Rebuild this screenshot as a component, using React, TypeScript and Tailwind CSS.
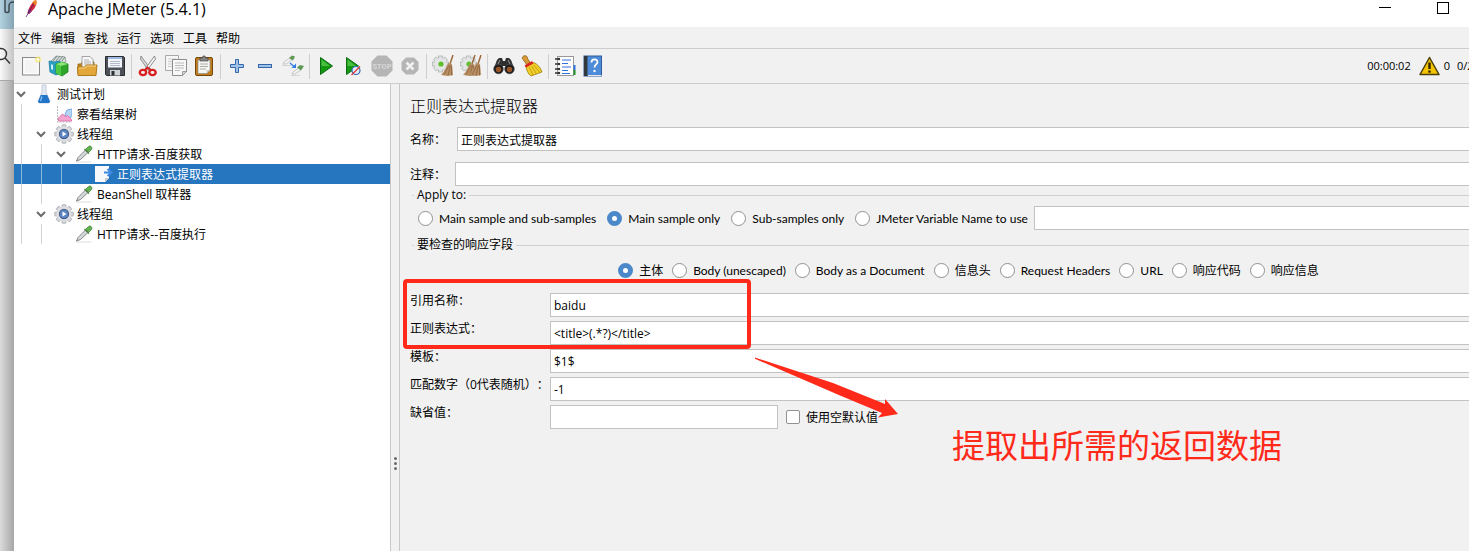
import type { ReactNode } from 'react';

interface ToolItem {
  name: string;
  icon: ReactNode;
  disabled?: boolean;
}

interface TreeItem {
  label: string;
  guides: number;
  chevron: boolean;
  icon: ReactNode;
  selected?: boolean;
}

const NewIcon = () => (
  <svg className="w-5 h-5" viewBox="0 0 20 20">
    <rect x="1.5" y="1.5" width="17" height="17.5" fill="#efefef" stroke="#8b8b8b" />
    <rect x="3" y="3" width="14" height="14.5" fill="#f4f4f4" stroke="#fff" />
    <circle cx="17" cy="3.5" r="3" fill="#f3e36b" opacity="0.8" />
    <circle cx="17" cy="3.5" r="1.5" fill="#fffde0" />
  </svg>
);

const TemplatesIcon = () => (
  <svg className="w-[22px] h-[22px]" viewBox="0 0 22 22">
    <path d="M3 6l5-5 9 1 1 5-12 4z" fill="#d9dcda" stroke="#8f9b99" strokeWidth="0.8" />
    <path d="M5 6l4-5M8 6l4-5M11 6l4-5M14 6l3-4" stroke="#6f8482" strokeWidth="0.9" />
    <path d="M1 6l5 1 6-1v12l-4 2-6-3z" fill="#2a9fc4" stroke="#1b7fa3" strokeWidth="0.8" />
    <path d="M3 9l2 1v5l-2-1z" fill="#c9ecf5" />
    <path d="M8 9l6-2 6 2v8l-6 4-6-3z" fill="#2fa52b" stroke="#1c861c" strokeWidth="0.8" />
    <path d="M8 9l5 2v10l-5-3z" fill="#4cc843" />
    <path d="M8 9l6-2 6 2-7 2z" fill="#8be678" />
  </svg>
);

const OpenIcon = () => (
  <svg className="w-[22px] h-[22px]" viewBox="0 0 22 22">
    <path d="M2 9h3l1-2h12v12H2z" fill="#c58a1d" stroke="#96640f" strokeWidth="0.8" />
    <path d="M6 1.500h8l3 3V14H6z" fill="#f7f7f7" stroke="#8f8f8f" strokeWidth="0.8" />
    <path d="M8 5h5M8 7h7M8 9h7" stroke="#a7a7a7" strokeWidth="0.9" />
    <path d="M1.500 12h7l2-2h10.500l-1 10.500H2z" fill="#e3a63a" stroke="#a87310" strokeWidth="0.9" />
    <path d="M3 13h6l2-2h9" stroke="#f8d588" fill="none" />
  </svg>
);

const SaveIcon = () => (
  <svg className="w-[22px] h-[22px]" viewBox="0 0 22 22">
    <path d="M1.500 1.500h18l1 1v18h-18l-1-1z" fill="#4d5157" stroke="#2b2d30" />
    <rect x="4" y="2" width="14" height="10.500" fill="#f1f5fb" />
    <path d="M4 2h14v2H4z" fill="#9dbbe2" />
    <path d="M6 6.500h10M6 8.500h10M6 10.500h10" stroke="#b5bcc6" />
    <rect x="6" y="15" width="10" height="5.500" fill="#cfd2d6" />
    <rect x="7.500" y="16" width="3" height="4.500" fill="#2e3034" />
  </svg>
);

const CutIcon = () => (
  <svg className="w-5 h-[22px]" viewBox="0 0 20 22">
    <path d="M3 1l9.500 13-2 1.500L2.500 4z" fill="#dcdcdc" stroke="#777" strokeWidth="0.8" />
    <path d="M16.500 1L7 14l2 1.500L17.500 4z" fill="#f2f2f2" stroke="#777" strokeWidth="0.8" />
    <ellipse cx="5" cy="17.500" rx="3.200" ry="2.600" fill="none" stroke="#d81e1e" strokeWidth="2.400" />
    <ellipse cx="14.500" cy="17.500" rx="3.200" ry="2.600" fill="none" stroke="#d81e1e" strokeWidth="2.400" />
    <path d="M7 15l2.500-2.500L12.500 15" fill="none" stroke="#d81e1e" strokeWidth="2" />
  </svg>
);

const CopyIcon = () => (
  <svg className="w-[22px] h-[22px]" viewBox="0 0 22 22">
    <path d="M.500 .500h13v15h-13z" fill="#f6f6f6" stroke="#a9a9a9" />
    <path d="M3 4h8M3 6.500h4M3 9h4M3 11.500h4" stroke="#ccc" />
    <path d="M7.500 4.500h14v12l-4 4h-10z" fill="#f8f8f8" stroke="#8d8d8d" />
    <path d="M10 8h9M10 10.500h9M10 13h9M10 15.500h5" stroke="#bbb" />
    <path d="M21.500 16.500h-4v4z" fill="#d6d6d6" stroke="#8d8d8d" strokeWidth="0.8" />
  </svg>
);

const PasteIcon = () => (
  <svg className="w-5 h-[22px]" viewBox="0 0 20 22">
    <rect x="1.500" y="2.500" width="17" height="18" rx="1.500" fill="#bf7d1e" stroke="#744607" />
    <path d="M4 5h12v10l-3.500 3.500H4z" fill="#f6f6f3" stroke="#8e8e8e" strokeWidth="0.7" />
    <path d="M6 9h8M6 11.500h8M6 14h6" stroke="#aaa" />
    <path d="M6 3h2.500l.5-2h2l.5 2H14v3H6z" fill="#858585" stroke="#4b4b4b" strokeWidth="0.7" />
    <path d="M16 15h-3.500v3.500z" fill="#cfcfcf" />
  </svg>
);

const PlusIcon = () => (
  <svg className="w-4 h-4" viewBox="0 0 16 16">
    <path d="M6.500 1.500h3v5h5v3h-5v5h-3v-5h-5v-3h5z" fill="#9fc1ea" stroke="#3467a8" />
  </svg>
);

const MinusIcon = () => (
  <svg className="w-4 h-4" viewBox="0 0 16 16">
    <rect x="1.500" y="6.500" width="13" height="3" fill="#9fc1ea" stroke="#3467a8" />
  </svg>
);

const ToggleIcon = () => (
  <svg className="w-[22px] h-[22px]" viewBox="0 0 22 22">
    <path d="M1 9l1-2 6-4 2 2-6 4z" fill="#f3f3f3" stroke="#b5b5b5" strokeWidth="0.7" />
    <path d="M7 3l3-2.500 3 1-2 4z" fill="#5f9a55" />
    <path d="M0 10.500h9" stroke="#d4d4d4" />
    <path d="M10 19l1-2 6-4 2 2-6 4z" fill="#f3f3f3" stroke="#b5b5b5" strokeWidth="0.7" />
    <path d="M15 12.500l3-2.500 4 1-3 4.500z" fill="#5f9a55" />
    <path d="M9 20.500h9" stroke="#d4d4d4" />
    <path d="M8 8l4 3.500" stroke="#2f7de0" strokeWidth="1.300" />
    <path d="M14 8.500v4.500H9.500z" fill="#2f7de0" />
  </svg>
);

const StartIcon = () => (
  <svg className="w-5 h-5" viewBox="0 0 20 20">
    <path d="M4.500 1.500v17l12-8.500z" fill="#12990f" stroke="#0c6b12" />
    <path d="M5.500 3.500v6.500h8.500z" fill="#5fcf55" opacity="0.7" />
  </svg>
);

const StartNoTimersIcon = () => (
  <svg className="w-5 h-5" viewBox="0 0 20 20">
    <path d="M2.500 1.500v17l12-8.500z" fill="#12990f" stroke="#0c6b12" />
    <path d="M3.500 3.500v6.500h8.500z" fill="#5fcf55" opacity="0.7" />
    <circle cx="12" cy="14.500" r="4" fill="#e6eefa" stroke="#2e66b5" strokeWidth="1.200" />
    <path d="M7.500 19L16 10.500" stroke="#df3a34" strokeWidth="1.200" />
  </svg>
);

const StopIcon = () => (
  <svg className="w-[22px] h-[22px]" viewBox="0 0 22 22">
    <path d="M6.500.5h9l6 6v9l-6 6h-9l-6-6v-9z" fill="#b5b5b5" />
    <text
      x="11"
      y="14"
      textAnchor="middle"
      fontSize="7.500"
      fontWeight="700"
      fontFamily="Roboto, sans-serif"
      fill="#d7d7d7"
    >
      STOP
    </text>
  </svg>
);

const ShutdownIcon = () => (
  <svg className="w-[18px] h-[18px]" viewBox="0 0 18 18">
    <path d="M5 .5h8L17.500 5v8L13 17.500H5L.5 13V5z" fill="#b5b5b5" />
    <path d="M5.500 5.500l7 7M12.500 5.500l-7 7" stroke="#f0f0f0" strokeWidth="2.600" />
  </svg>
);

const Broom = ({ x }: { x: number }) => (
  <g transform={`translate(${x} 0)`}>
    <path d="M11 0L8 9" stroke="#9a6a3c" strokeWidth="1.500" />
    <path d="M6 8l4 1 1 11-5 1-7-1c3-3 5-7 7-12z" fill="#b98f66" />
    <path d="M7 10L2 20M8.500 10L6 20.500M9.500 11v9.500" stroke="#8a6239" strokeWidth="0.800" />
  </g>
);

const Gear = () => (
  <>
    <g fill="#dfe2e2" stroke="#aaadad" strokeWidth="0.7">
      <rect x="6.500" y="1" width="4" height="16" />
      <rect x="6.500" y="1" width="4" height="16" transform="rotate(45 8.500 9)" />
      <rect x="6.500" y="1" width="4" height="16" transform="rotate(90 8.500 9)" />
      <rect x="6.500" y="1" width="4" height="16" transform="rotate(135 8.500 9)" />
    </g>
    <circle cx="8.500" cy="9" r="6" fill="#e4e6e6" />
    <circle cx="9" cy="9" r="2.600" fill="#5cc02a" />
  </>
);

const ClearIcon = () => (
  <svg className="w-[22px] h-[22px]" viewBox="0 0 22 22">
    <Gear />
    <Broom x={10} />
  </svg>
);

const ClearAllIcon = () => (
  <svg className="w-[22px] h-[22px]" viewBox="0 0 22 22">
    <Gear />
    <Broom x={4} />
    <Broom x={10} />
  </svg>
);

const SearchIcon = () => (
  <svg className="w-[22px] h-[18px]" viewBox="0 0 22 18">
    <path d="M4 3l2-2h3l1 3h2l1-3h3l2 2 3 8v3H12V9h-2v5H1v-3z" fill="#2f2f2f" />
    <circle cx="5.500" cy="12" r="4.800" fill="#1c1c1c" stroke="#555" strokeWidth="0.700" />
    <circle cx="16.500" cy="12" r="4.800" fill="#1c1c1c" stroke="#555" strokeWidth="0.700" />
    <circle cx="5.500" cy="12.500" r="2.700" fill="#9a5526" />
    <circle cx="16.500" cy="12.500" r="2.700" fill="#9a5526" />
    <path d="M7 3l-2 4M15 3l2 4" stroke="#999" />
  </svg>
);

const ResetSearchIcon = () => (
  <svg className="w-[22px] h-[22px]" viewBox="0 0 22 22">
    <path d="M2 1.500c2-2 5 0 4.500 2l2.500 4-3 2.500L2.500 5C1 4 1 2.500 2 1.500z" fill="#d79a35" stroke="#8a5a12" strokeWidth="0.800" />
    <path d="M5 11.500l7.500-4c4 1.500 7 5 8.500 9.500L10 21c-3-2-4.500-6-5-9.500z" fill="#f2ce28" stroke="#9c7d0c" strokeWidth="0.800" />
    <path d="M8 12l4 8M10.500 11l5 8M12.500 10l6.500 7.500" stroke="#b99713" strokeWidth="0.800" />
    <path d="M3.500 10.500L11 6l1.500 2.500-7.500 4z" fill="#d9281f" />
  </svg>
);

const FunctionIcon = () => (
  <svg className="w-[22px] h-[22px]" viewBox="0 0 22 22">
    <rect x="3.500" y="1.500" width="16" height="19" fill="#fff" stroke="#999" />
    <path d="M1 4h4M1 9h4M1 14h4M1 18h4" stroke="#333" strokeWidth="1.300" />
    <circle cx="5" cy="4" r="1.200" fill="#333" />
    <circle cx="5" cy="9" r="1.200" fill="#333" />
    <circle cx="5" cy="14" r="1.200" fill="#333" />
    <circle cx="5" cy="18" r="1.200" fill="#333" />
    <path d="M8 5h9M8 8.500h6M8 12h9M8 15.500h6M8 18.500h8" stroke="#2f72dc" strokeWidth="1.200" />
    <path d="M19.500 10h2v5h-2z" fill="#2f72dc" />
    <path d="M19.500 15h2v5h-2z" fill="#1d9127" />
  </svg>
);

const HelpIcon = () => (
  <svg className="w-5 h-[22px]" viewBox="0 0 20 22">
    <rect x="1" y="1" width="17.500" height="20" fill="#4e8bd8" stroke="#2f5c9c" />
    <path d="M1 1h3.500v20H1z" fill="#33383f" />
    <path d="M5 20.500h13.500" stroke="#e8e8e8" />
    <path
      d="M8.500 7.500c0-4 6-4 6-.5 0 2.500-3 2.500-3 5.500"
      fill="none"
      stroke="#fff"
      strokeWidth="1.700"
    />
    <circle cx="11.500" cy="16" r="1.200" fill="#fff" />
  </svg>
);

const WarningIcon = () => (
  <svg className="w-[21px] h-5" viewBox="0 0 21 20">
    <path d="M10.500 1.500L20 18.500H1z" fill="#f5c400" stroke="#4a3f0a" strokeWidth="1.500" strokeLinejoin="round" />
    <path d="M10.500 6.500v6.500" stroke="#2b2500" strokeWidth="2.400" />
    <path d="M10.500 14.500v2.200" stroke="#2b2500" strokeWidth="2.400" />
  </svg>
);

const FlaskIcon = () => (
  <svg className="w-[14px] h-5" viewBox="0 0 14 20">
    <path d="M5 1h4v7l4 9.500-1 1.500H2l-1-1.500L5 8z" fill="#e3e9f2" stroke="#b9c2d0" strokeWidth="0.800" />
    <path d="M3.800 11h6.400l2.800 6.500-1 1.500H2l-1-1.500z" fill="#2276c9" />
    <path d="M5 12.500L3.500 17" stroke="#8fc4f4" strokeWidth="1.200" />
  </svg>
);

const GraphIcon = () => (
  <svg className="w-4 h-[18px]" viewBox="0 0 16 18">
    <path d="M1.500 1v16H16" fill="none" stroke="#bbb" strokeDasharray="2 1" />
    <path d="M9 9l2-4 5-1v6l-2 4-4-2z" fill="#b5d4f3" stroke="#6fa6e0" strokeWidth="0.900" />
    <path d="M2.500 16v-3l4-4 3 2.500 2-1 4 4V16z" fill="#f3a4cf" stroke="#dc70ae" strokeWidth="0.900" />
  </svg>
);

const ThreadGroupIcon = () => (
  <svg className="w-5 h-5" viewBox="0 0 20 20">
    <g fill="#d5d7da" stroke="#9b9da2" strokeWidth="0.7">
      <rect x="8" y="0.700" width="4" height="18.600" rx="1" />
      <rect x="8" y="0.700" width="4" height="18.600" rx="1" transform="rotate(45 10 10)" />
      <rect x="8" y="0.700" width="4" height="18.600" rx="1" transform="rotate(90 10 10)" />
      <rect x="8" y="0.700" width="4" height="18.600" rx="1" transform="rotate(135 10 10)" />
    </g>
    <circle cx="10" cy="10" r="7.400" fill="#dfe1e4" />
    <circle cx="10" cy="10" r="4.600" fill="#5b86c2" stroke="#4b6391" strokeWidth="1.200" />
    <path d="M8.500 7.500v5l4-2.500z" fill="#fff" />
  </svg>
);

const SamplerIcon = () => (
  <svg className="w-[18px] h-[18px]" viewBox="0 0 18 18">
    <path d="M1 17h15" stroke="#ddd" />
    <path d="M1.500 16l1.500-3.500L10.500 5 13 7.500 5.500 14.500z" fill="#d7dadb" stroke="#6a6e70" strokeWidth="0.800" />
    <path d="M9.500 4l4.500 4.500" stroke="#4c7a42" strokeWidth="1.500" />
    <path d="M10.500 4.500L13.500 1.500c1.500-1.500 4.500.5 3 3l-3 3z" fill="#62b04f" stroke="#3f7d33" strokeWidth="0.700" />
  </svg>
);

const ExtractorIcon = () => (
  <svg className="w-5 h-[18px]" viewBox="0 0 20 18">
    <path d="M1 1h14v12l-4 4H1z" fill="#f7f8fa" />
    <path d="M15 13h-4v4z" fill="#c5ccd6" />
    <path d="M10 7.500h7M13.500 4l4 3.500-4 3.500" fill="none" stroke="#3e8ae0" strokeWidth="2" />
  </svg>
);

const ChevronIcon = () => (
  <svg className="w-[14px] h-4" viewBox="0 0 14 16">
    <path d="M3 6l4 4 4-4" fill="none" stroke="#6b6b6b" strokeWidth="2" />
  </svg>
);

const FeatherIcon = () => (
  <svg className="w-4 h-5" viewBox="0 0 16 20">
    <path d="M3.500 13C5 7 8 2 12 0c1.500 3-.5 8-4 11l-3 3z" fill="#d3273e" />
    <path d="M8 3c1-2 2.500-3 4-3 .8 1.500.7 3.500 0 5.500z" fill="#f08a24" />
    <path d="M3.500 13c.5-2 1-3 1.800-4.500L8 11l-3 3z" fill="#8b2a7e" />
    <path d="M2 17L10 3" stroke="#5a2065" strokeWidth="0.800" />
  </svg>
);

const menus = ['文件', '编辑', '查找', '运行', '选项', '工具', '帮助'];

const toolGroups: ToolItem[][] = [
  [
    { name: 'New', icon: <NewIcon /> },
    { name: 'Templates', icon: <TemplatesIcon /> },
    { name: 'Open', icon: <OpenIcon /> },
    { name: 'Save', icon: <SaveIcon /> },
  ],
  [
    { name: 'Cut', icon: <CutIcon /> },
    { name: 'Copy', icon: <CopyIcon /> },
    { name: 'Paste', icon: <PasteIcon /> },
  ],
  [
    { name: 'Expand All', icon: <PlusIcon /> },
    { name: 'Collapse All', icon: <MinusIcon /> },
    { name: 'Toggle', icon: <ToggleIcon /> },
  ],
  [
    { name: 'Start', icon: <StartIcon /> },
    { name: 'Start no pauses', icon: <StartNoTimersIcon /> },
    { name: 'Stop', icon: <StopIcon />, disabled: true },
    { name: 'Shutdown', icon: <ShutdownIcon />, disabled: true },
  ],
  [
    { name: 'Clear', icon: <ClearIcon /> },
    { name: 'Clear All', icon: <ClearAllIcon /> },
  ],
  [
    { name: 'Search', icon: <SearchIcon /> },
    { name: 'Reset Search', icon: <ResetSearchIcon /> },
  ],
  [
    { name: 'Function Helper', icon: <FunctionIcon /> },
    { name: 'Help', icon: <HelpIcon /> },
  ],
];

const tree: TreeItem[] = [
  { label: '测试计划', guides: 0, chevron: true, icon: <FlaskIcon /> },
  { label: '察看结果树', guides: 1, chevron: false, icon: <GraphIcon /> },
  { label: '线程组', guides: 1, chevron: true, icon: <ThreadGroupIcon /> },
  { label: 'HTTP请求-百度获取', guides: 2, chevron: true, icon: <SamplerIcon /> },
  { label: '正则表达式提取器', guides: 3, chevron: false, icon: <ExtractorIcon />, selected: true },
  { label: 'BeanShell 取样器', guides: 2, chevron: false, icon: <SamplerIcon /> },
  { label: '线程组', guides: 1, chevron: true, icon: <ThreadGroupIcon /> },
  { label: 'HTTP请求--百度执行', guides: 2, chevron: false, icon: <SamplerIcon /> },
];

const scopes = ['Main sample and sub-samples', 'Main sample only', 'Sub-samples only', 'JMeter Variable Name to use'];

const responseFields = [
  '主体',
  'Body (unescaped)',
  'Body as a Document',
  '信息头',
  'Request Headers',
  'URL',
  '响应代码',
  '响应信息',
];

const extractorFields = [
  { id: 'refname', label: '引用名称：', value: 'baidu' },
  { id: 'regex', label: '正则表达式：', value: '<title>(.*?)</title>' },
  { id: 'template', label: '模板：', value: '$1$' },
  { id: 'match', label: '匹配数字（0代表随机）：', value: '-1' },
];

const inputClass = 'h-6 min-w-0 bg-white border border-[#c2c2c2] px-[3px] outline-none';

function Radio({ group, label, checked }: { group: string; label: string; checked: boolean }) {
  return (
    <label className="flex items-center gap-1.5 whitespace-nowrap font-['Lato','Noto_Sans_CJK_SC',sans-serif]">
      <input
        type="radio"
        name={group}
        defaultChecked={checked}
        className="appearance-none w-[15px] h-[15px] shrink-0 rounded-full bg-white border border-[#919191] checked:border-5 checked:border-[#4a88c9]"
      />
      <span className="pt-0.5">{label}</span>
    </label>
  );
}

function TreeRow({ item }: { item: TreeItem }) {
  return (
    <li
      role="treeitem"
      aria-selected={!!item.selected}
      className={`flex items-center h-5 whitespace-nowrap ${item.selected ? 'bg-[#2675bf] text-white' : ''}`}
    >
      {Array.from({ length: item.guides }, (_, i) => (
        <span key={i} className="w-5 h-5 pl-[7px] shrink-0">
          <span className={`block w-px h-5 ${item.selected ? 'bg-[#8db8de]' : 'bg-[#d2d2d2]'}`} />
        </span>
      ))}
      <span className="w-5 shrink-0">{item.chevron && <ChevronIcon />}</span>
      <span className="w-5 mr-[3px] shrink-0 flex justify-center">{item.icon}</span>
      <span className="pt-0.5">{item.label}</span>
    </li>
  );
}

export default function App() {
  return (
    <div className="flex h-screen overflow-hidden text-xs text-black font-['Open_Sans','Noto_Sans_CJK_SC',sans-serif] [text-spacing-trim:space-all]">
      {/* Window behind */}
      <div className="w-[14px] shrink-0 overflow-hidden flex flex-col">
        <div className="h-[29px] bg-linear-to-r from-[#b3d2e0] to-[#86a4b4]">
          <svg className="w-[14px] h-4" viewBox="0 0 14 16" fill="none" stroke="#3c4a52" strokeWidth="1.5">
            <path d="M5 0v11c0 2 4 2 4 0V6c0-3 1-4 5-4" />
          </svg>
        </div>
        <div className="h-[52px] pt-[17px] bg-linear-to-r from-[#fafafa] to-[#c4c4c4] border-b border-[#a8a8a8]">
          <svg className="w-[14px] h-5" viewBox="0 0 14 20" fill="none" stroke="#333" strokeWidth="1.4">
            <circle cx="1" cy="8" r="5.500" />
            <path d="M5 12l5 5.500" />
          </svg>
        </div>
        <div className="flex-1 bg-linear-to-r from-[#dcdcdc] to-[#a6a6a6]" />
      </div>

      <div className="flex-1 min-w-0 flex flex-col bg-[#f1f1f1]">
        {/* Title bar */}
        <header className="h-[27px] shrink-0 flex items-start justify-between bg-white">
          <div className="flex items-start gap-2 pl-[10px]">
            <FeatherIcon />
            <h1 className="text-base leading-[18px]">Apache JMeter (5.4.1)</h1>
          </div>
          <div className="flex pr-5 gap-[46px]">
            <button type="button" aria-label="Minimize" className="w-3 h-4">
              <svg className="w-3 h-4" viewBox="0 0 12 16">
                <path d="M0 7.500h12" stroke="#000" />
              </svg>
            </button>
            <button type="button" aria-label="Maximize" className="w-3 h-4">
              <svg className="w-3 h-4" viewBox="0 0 12 16">
                <rect x="0.500" y="2.500" width="11" height="11" fill="none" stroke="#000" />
              </svg>
            </button>
          </div>
        </header>

        {/* Menu bar */}
        <nav className="h-[22px] shrink-0 flex items-center gap-[9px] pl-1 pt-0.5 border-b border-[#cdcdcd]">
          {menus.map((menu) => (
            <button key={menu} type="button" className="leading-4">
              {menu}
            </button>
          ))}
        </nav>

        {/* Toolbar */}
        <div className="h-[35px] shrink-0 flex items-center pl-[3px] border-b border-[#cdcdcd]">
          {toolGroups.map((group, i) => (
            <div key={i} className="flex items-center">
              {i > 0 && <span className="w-px h-[25px] mx-0.5 bg-[#cfcfcf]" />}
              {group.map((tool) => (
                <button
                  key={tool.name}
                  type="button"
                  aria-label={tool.name}
                  disabled={tool.disabled}
                  className="w-7 h-7 flex items-center justify-center"
                >
                  {tool.icon}
                </button>
              ))}
            </div>
          ))}
          <div className="ml-auto flex items-center text-[11px]">
            <span>00:00:02</span>
            <span className="ml-2 mr-1">
              <WarningIcon />
            </span>
            <span>0</span>
            <span className="ml-[7px] w-3 overflow-hidden whitespace-nowrap">0/2</span>
          </div>
        </div>

        <div className="flex-1 min-h-0 flex">
          {/* Test plan tree */}
          <ul role="tree" className="w-[376px] shrink-0 bg-white">
            {tree.map((item, i) => (
              <TreeRow key={i} item={item} />
            ))}
          </ul>

          {/* Splitter */}
          <div className="w-[10px] shrink-0 flex flex-col items-center gap-0.5 pt-[373px] border-x border-[#c8c8c8]">
            <span className="w-[3px] h-[3px] rounded-full bg-[#6a6a6a]" />
            <span className="w-[3px] h-[3px] rounded-full bg-[#6a6a6a]" />
            <span className="w-[3px] h-[3px] rounded-full bg-[#6a6a6a]" />
          </div>

          {/* Extractor settings */}
          <main className="relative flex-1 min-w-0 pl-[10px] pt-3">
            <h2 className="text-base leading-5 font-light">正则表达式提取器</h2>
            <div className="flex items-center mt-[11px]">
              <label htmlFor="name" className="w-[47px] pt-0.5 shrink-0 whitespace-nowrap">名称：</label>
              <input id="name" defaultValue="正则表达式提取器" className={`${inputClass} pt-0.5 flex-1 border-r-0`} />
            </div>
            <div className="flex items-center mt-[11px]">
              <label htmlFor="comment" className="w-[45px] pt-0.5 shrink-0 whitespace-nowrap">注释：</label>
              <input id="comment" className={`${inputClass} flex-1 border-r-0`} />
            </div>

            <fieldset className="ml-0.5 mt-px border-t border-[#d0d0d0]">
              <legend className="ml-0.5 px-[3px] leading-4">Apply to:</legend>
              <div className="flex items-center gap-1.5 pl-1.5 pt-[3px]">
                <div className="flex items-center gap-[11px]">
                  {scopes.map((scope) => (
                    <Radio key={scope} group="scope" label={scope} checked={scope === 'Main sample only'} />
                  ))}
                </div>
                <input aria-label="JMeter Variable Name" className={`${inputClass} flex-1 border-r-0`} />
              </div>
            </fieldset>

            <fieldset className="ml-0.5 mt-[7px] border-t border-[#d0d0d0]">
              <legend className="ml-0.5 px-[3px] leading-4">要检查的响应字段</legend>
              <div className="flex items-center justify-center gap-[9px] h-4 mt-[9px] pl-14">
                {responseFields.map((field) => (
                  <Radio key={field} group="field" label={field} checked={field === '主体'} />
                ))}
              </div>
            </fieldset>

            <div className="mt-[15px] flex flex-col gap-1">
              {extractorFields.map((field) => (
                <div key={field.id} className="flex items-start">
                  <label htmlFor={field.id} className="w-[140px] shrink-0 whitespace-nowrap leading-4">
                    {field.label}
                  </label>
                  <input id={field.id} defaultValue={field.value} className={`${inputClass} flex-1 border-r-0`} />
                </div>
              ))}
              <div className="flex items-start">
                <label htmlFor="default" className="w-[140px] shrink-0 leading-4">缺省值：</label>
                <input id="default" className={`${inputClass} w-[228px]`} />
                <label className="flex items-center gap-1.5 h-6 ml-2">
                  <input
                    type="checkbox"
                    className="appearance-none w-[14px] h-[14px] rounded-xs bg-white border border-[#919191]"
                  />
                  <span className="pt-0.5">使用空默认值</span>
                </label>
              </div>
            </div>

            {/* Annotation */}
            <div className="absolute left-[3px] top-[195px] w-[348px] h-[70px] rounded border-4 border-[#ff2a1a] pointer-events-none" />
            <svg
              className="absolute left-[354px] top-[272px] w-[146px] h-[62px] pointer-events-none"
              viewBox="0 0 146 62"
            >
              <path d="M1 1.500L79 27L131 48V43L144 58L124 61.500L128 57L86 39.500L1 2.800Z" fill="#ff2a1a" />
            </svg>
            <p className="absolute left-[552px] top-[342px] text-[33px] leading-10 whitespace-nowrap text-[#ff2a1a]">
              提取出所需的返回数据
            </p>
          </main>
        </div>
      </div>
    </div>
  );
}
